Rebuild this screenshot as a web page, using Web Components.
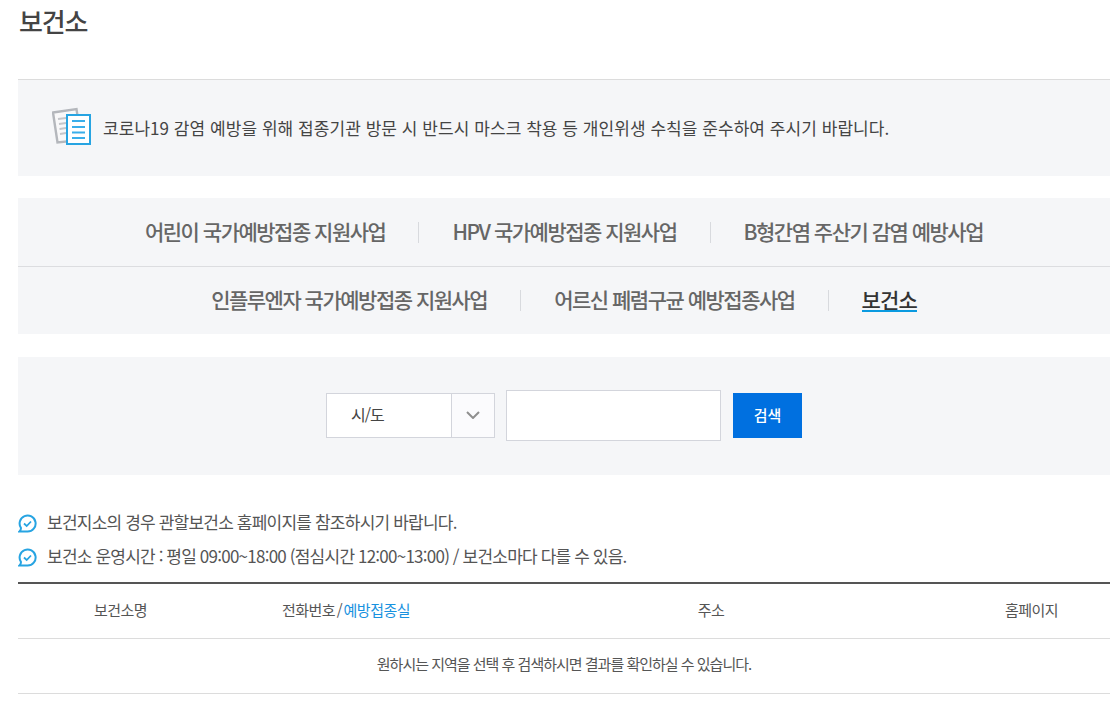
<!DOCTYPE html>
<html lang="ko">
<head>
<meta charset="utf-8">
<title>보건소</title>
<style>
body {
    margin: 0;
    padding: 0 7px 0 18px;
    background: #fff;
    color: #444;
    font-family: "Noto Sans CJK KR", "Noto Sans", sans-serif;
    overflow: hidden;
}
</style>
</head>
<body>
<page-title>보건소</page-title>
<notice-box>코로나19 감염 예방을 위해 접종기관 방문 시 반드시 마스크 착용 등 개인위생 수칙을 준수하여 주시기 바랍니다.</notice-box>
<tab-menu>
    <tab-row>
        <tab-item>어린이 국가예방접종 지원사업</tab-item>
        <tab-item>HPV 국가예방접종 지원사업</tab-item>
        <tab-item>B형간염 주산기 감염 예방사업</tab-item>
    </tab-row>
    <tab-row>
        <tab-item>인플루엔자 국가예방접종 지원사업</tab-item>
        <tab-item>어르신 폐렴구균 예방접종사업</tab-item>
        <tab-item active>보건소</tab-item>
    </tab-row>
</tab-menu>
<search-box></search-box>
<check-note>보건지소의 경우 관할보건소 홈페이지를 참조하시기 바랍니다.</check-note>
<check-note>보건소 운영시간 : 평일 09:00~18:00 (점심시간 12:00~13:00) / 보건소마다 다를 수 있음.</check-note>
<result-table></result-table>
<script>
function define(name, html) {
    customElements.define(name, class extends HTMLElement {
        constructor() {
            super();
            this.attachShadow({ mode: 'open' }).innerHTML = html;
        }
    });
}

define('page-title', `
<style>
:host { display: block; height: 79px; border-bottom: 1px solid #dcdcdc; }
h1 { margin: 0; padding: 3px 0 0 1px; font-size: 26px; line-height: 36px; font-weight: 500; letter-spacing: -1.2px; color: #444; }
</style>
<h1><slot></slot></h1>`);

define('notice-box', `
<style>
:host { display: flex; align-items: center; gap: 10px; height: 96px; padding-left: 34px; background: #f5f6f8; }
svg { flex: none; margin-top: -2px; }
p { margin: -2px 0 0; font-size: 17px; letter-spacing: 0.05px; color: #444; }
</style>
<svg width="41" height="40" viewBox="0 0 41 40">
    <path d="M1 5.5 L24.5 2 L29 33 L5.5 35.5 Z" fill="#f8f8f9" stroke="#b4b7bc" stroke-width="2.4"/>
    <path d="M6 12 L14 11 M7 17 L14 16 M7.5 22 L14 21 M8 27 L14 26" stroke="#c4c6ca" stroke-width="1.8"/>
    <rect x="15" y="8" width="23" height="29" fill="#fff" stroke="#27a4e2" stroke-width="2"/>
    <path d="M20 14 H33 M20 20 H33 M20 25.5 H33 M20 31 H33" stroke="#3aaeea" stroke-width="2"/>
</svg>
<p><slot></slot></p>`);

define('tab-menu', `
<style>
:host { display: block; margin-top: 22px; background: #f5f6f8; }
::slotted(tab-row:first-child) { border-bottom: 1px solid #dcdde0; }
::slotted(tab-row:last-child) { height: 67px; }
</style>
<slot></slot>`);

define('tab-row', `
<style>
:host { display: flex; justify-content: center; align-items: center; height: 68px; }
::slotted(tab-item:not(:first-child)) { margin-left: 33px; padding-left: 33px; border-left: 1px solid #d8dade; }
</style>
<slot></slot>`);

define('tab-item', `
<style>
:host { display: block; font-size: 21px; line-height: 21px; font-weight: 500; letter-spacing: -1.5px; color: #666; }
:host([active]) { color: #333; letter-spacing: -0.9px; }
span { display: inline-block; line-height: 21px; position: relative; top: -1px; }
:host([active]) span { border-bottom: 2px solid #0a9ae0; margin-bottom: -2px; }
</style>
<span><slot></slot></span>`);

define('search-box', `
<style>
:host { display: flex; justify-content: center; align-items: center; margin-top: 23px; height: 116px; padding-bottom: 2px; background: #f5f6f8; }
.select { display: flex; box-sizing: border-box; width: 169px; height: 45px; border: 1px solid #d3d5dc; background: #fff; }
.value { width: 100px; padding-left: 24px; font-size: 16px; line-height: 41px; letter-spacing: -1px; color: #444; border-right: 1px solid #d3d5dc; }
.arrow { display: flex; flex: 1; align-items: center; justify-content: center; background: #fbfbfd; }
.input { box-sizing: border-box; width: 215px; height: 51px; margin-left: 11px; border: 1px solid #d3d5dc; background: #fff; }
.btn { width: 69px; height: 45px; margin-left: 12px; background: #0070e0; color: #fff; font-size: 15px; font-weight: 500; line-height: 43px; text-align: center; }
</style>
<div class="select">
    <div class="value">시/도</div>
    <div class="arrow"><svg width="14" height="8" viewBox="0 0 14 8"><path d="M1 1 L7 7 L13 1" fill="none" stroke="#8f8f8f" stroke-width="2"/></svg></div>
</div>
<div class="input"></div>
<div class="btn">검색</div>`);

define('check-note', `
<style>
:host { display: flex; align-items: center; gap: 10px; height: 34px; font-size: 17px; letter-spacing: -0.75px; word-spacing: -0.3px; color: #555; }
:host(:nth-of-type(1)) { margin-top: 31px; }
svg { flex: none; margin-top: 1px; }
span { margin-top: -3px; }
</style>
<svg width="19" height="19" viewBox="0 0 19 19">
    <path d="M1.5 17.5 H9.5 A8 8 0 1 0 3 14 Q3 16 1.5 17.5 Z" fill="none" stroke="#27a4e2" stroke-width="2"/>
    <path d="M6 9.5 L8.7 12 L13 7.5" fill="none" stroke="#27a4e2" stroke-width="1.8"/>
</svg>
<span><slot></slot></span>`);

define('result-table', `
<style>
:host { display: block; margin-top: 8px; border-top: 2px solid #555; font-size: 15px; letter-spacing: -0.5px; color: #555; }
.row { display: grid; grid-template-columns: 205px 246px 1fr 157px; align-items: center; text-align: center; height: 51px; padding-bottom: 3px; border-bottom: 1px solid #dcdcdc; }
.msg { height: 54px; line-height: 50px; text-align: center; border-bottom: 1px solid #dcdcdc; letter-spacing: -1px; }
.blue { color: #1892e0; }
.slash { padding: 0 1.5px; }
</style>
<div class="row">
    <div>보건소명</div>
    <div>전화번호<span class="slash">/</span><span class="blue">예방접종실</span></div>
    <div>주소</div>
    <div>홈페이지</div>
</div>
<div class="msg">원하시는 지역을 선택 후 검색하시면 결과를 확인하실 수 있습니다.</div>`);
</script>
</body>
</html>
